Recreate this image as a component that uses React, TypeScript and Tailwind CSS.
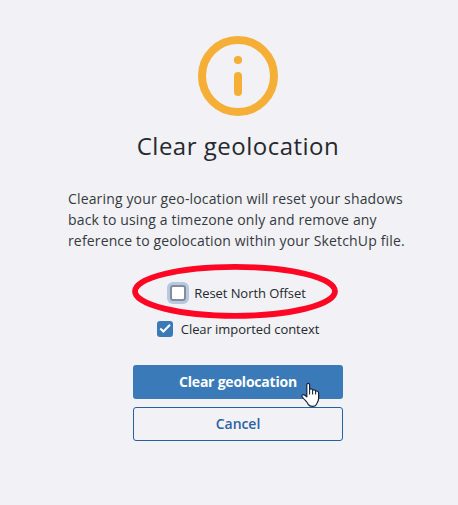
import React, { useState } from 'react';

interface CheckOptionProps {
  label: string;
  checked: boolean;
  focused?: boolean;
  onChange: (checked: boolean) => void;
}

function InfoIcon() {
  return (
    <svg width="80" height="80" viewBox="0 0 80 80" fill="none">
      <circle cx="40" cy="40" r="36" stroke="#f5ae36" strokeWidth="8" />
      <circle cx="40" cy="24" r="4.1" fill="#f5ae36" />
      <rect x="36" y="36" width="8" height="24" rx="4" fill="#f5ae36" />
    </svg>
  );
}

function CheckOption({ label, checked, focused, onChange }: CheckOptionProps) {
  return (
    <label className="flex items-center gap-2 text-[13px] leading-4 tracking-[-0.06px] whitespace-nowrap">
      <input
        type="checkbox"
        className="sr-only"
        checked={checked}
        onChange={(e) => onChange(e.target.checked)}
      />
      <span
        className={
          checked
            ? 'flex size-4 rounded-[3px] bg-[#3a7ab8]'
            : 'flex size-4 rounded-[3px] border-2 border-[#8b8b98] bg-white' +
              (focused ? ' ring-[3px] ring-[#b3cae3]' : '')
        }
      >
        {checked && (
          <svg width="16" height="16" viewBox="0 0 16 16" fill="none">
            <path d="M3.3 7.4L6.4 10.6L13 3.8" stroke="white" strokeWidth="2.1" />
          </svg>
        )}
      </span>
      {label}
    </label>
  );
}

export default function App() {
  const [resetNorth, setResetNorth] = useState(false);
  const [clearContext, setClearContext] = useState(true);

  return (
    <div className="h-[505px] w-[458px] overflow-hidden bg-[#f1f1f6] font-['Open_Sans',sans-serif] text-[#252a2e]">
      <div className="flex w-[476px] flex-col items-center pt-9">
        <InfoIcon />
        <h1 className="mt-3.5 text-2xl leading-8 tracking-[0.5px] whitespace-nowrap">
          Clear geolocation
        </h1>
        <p className="mt-[26px] w-[340px] text-sm leading-[21px] tracking-[0.15px] whitespace-nowrap text-[#353a40]">
          Clearing your geo-location will reset your shadows
          <br />
          back to using a timezone only and remove any
          <br />
          reference to geolocation within your SketchUp file.
        </p>

        {/* Options */}
        <div className="relative mt-[34px] flex flex-col items-center gap-5">
          <CheckOption
            label="Reset North Offset"
            checked={resetNorth}
            focused
            onChange={setResetNorth}
          />
          <CheckOption
            label="Clear imported context"
            checked={clearContext}
            onChange={setClearContext}
          />
          {/* Highlight around the first option */}
          <svg
            className="pointer-events-none absolute -top-[23px] left-1/2 -ml-[107px]"
            width="210"
            height="60"
            viewBox="0 0 210 60"
            fill="none"
          >
            <ellipse cx="104" cy="29.3" rx="100" ry="24.5" stroke="#ff0624" strokeWidth="5.8" />
          </svg>
        </div>

        {/* Actions */}
        <div className="relative mt-7 flex w-[210px] flex-col gap-2 text-sm">
          <button className="h-[34px] rounded-[3px] bg-[#3a7ab8] font-bold tracking-[-0.22px] text-white">
            Clear geolocation
          </button>
          <button className="h-[34px] rounded-[3px] border border-[#2361a0] font-semibold tracking-[-0.05px] text-[#2c62a3]">
            Cancel
          </button>
          <svg
            className="pointer-events-none absolute top-[17px] left-[167px]"
            width="20"
            height="26"
            viewBox="0 0 20 26"
          >
            <path
              d="M6.8 2.8C6.8 .9 9.6 .9 9.6 2.8V7.5C10.3 6.4 12.6 6.7 12.6 8.3C13.3 7.3 15.6 7.7 15.6 9.3C16.8 8.6 18.6 9.2 18.6 11V16.5C18.6 19.5 17 20.3 16.6 22.2C15 25.2 10 25.2 8 22.2C7.2 19.5 4.3 18 2.3 15C.8 12.5 3.5 11.5 6.8 14.8Z"
              fill="white"
              stroke="#17243a"
              strokeWidth="1.2"
              strokeLinejoin="round"
            />
            <path d="M9.6 7V12.5M12.6 8V12.5M15.6 9V12.5" stroke="#17243a" strokeWidth="1.1" />
          </svg>
        </div>
      </div>
    </div>
  );
}
